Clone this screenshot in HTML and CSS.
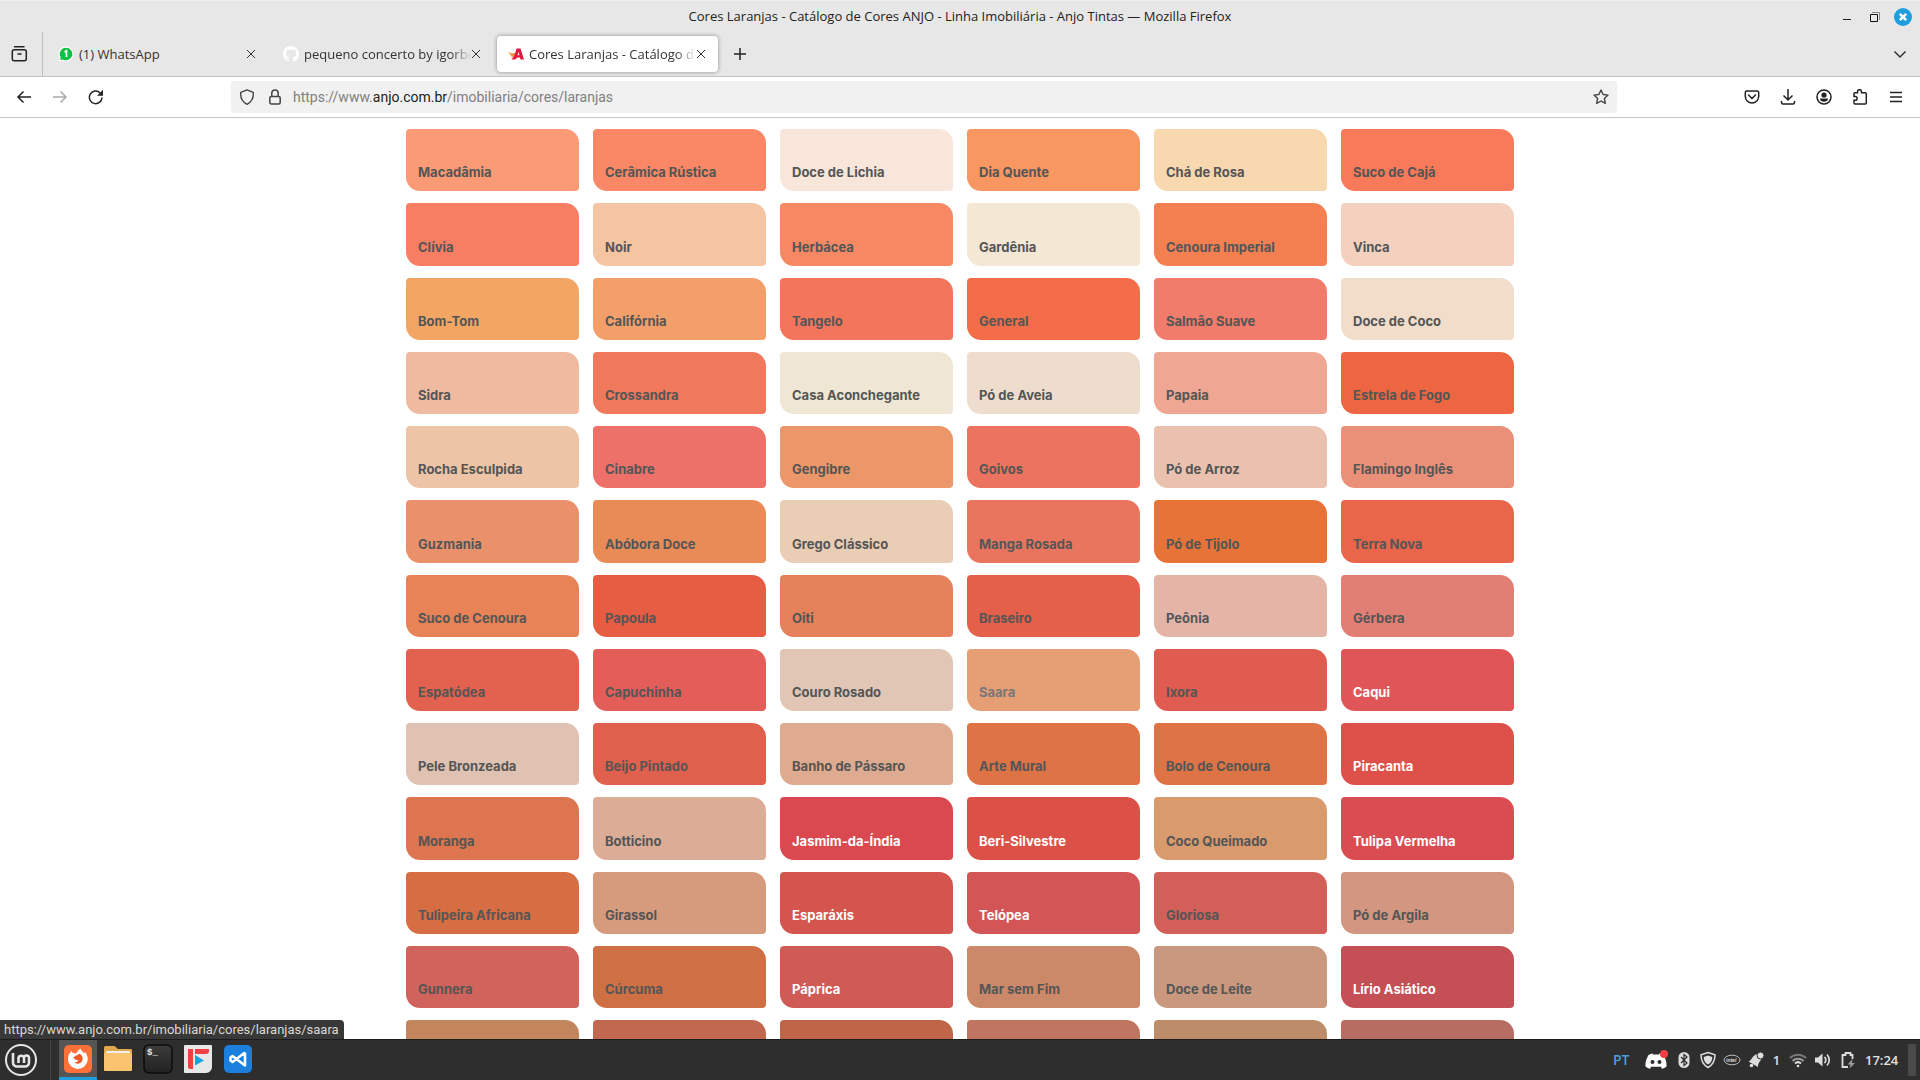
FILE: index.html
```html
<!DOCTYPE html>
<html lang="pt-BR">
<head>
<meta charset="utf-8">
<meta name="viewport" content="width=device-width, initial-scale=1">
<title>Cores Laranjas - Catálogo de Cores ANJO - Linha Imobiliária - Anjo Tintas</title>
<link rel="stylesheet" href="styles.css">
</head>
<body>
<header class="titlebar">
  <span class="window-title">Cores Laranjas - Catálogo de Cores ANJO - Linha Imobiliária - Anjo Tintas — Mozilla Firefox</span>
  <div class="window-controls">
    <button class="win" aria-label="Minimizar"><svg width="18" height="18" viewBox="0 0 18 18"><path d="M5 11.5h8" stroke="#222"/></svg></button>
    <button class="win" aria-label="Restaurar"><svg width="18" height="18" viewBox="0 0 18 18" fill="none"><path d="M6 4.5h7.500v7.500" stroke="#888"/><path d="M4.500 6.500h7v7h-7z" stroke="#111"/></svg></button>
    <button class="win" aria-label="Fechar"><svg width="18" height="18" viewBox="0 0 18 18"><circle cx="9" cy="9" r="9" fill="#1f9ede"/><path d="M5.800 5.800l6.400 6.400M12.200 5.800l-6.400 6.400" stroke="#fff" stroke-width="2.400"/></svg></button>
  </div>
</header>

<nav class="tabbar" aria-label="Abas">
  <button class="view-btn" aria-label="Visão do Firefox"><svg width="18" height="18" viewBox="0 0 18 18" fill="none" stroke="#222" stroke-width="1.500" stroke-linecap="round"><path d="M3.500 1.800h9.500"/><rect x="1.300" y="4.800" width="14" height="11" rx="2"/><path d="M7 9h3"/></svg></button>
  <div class="tab">
    <svg class="fav" width="16" height="16" viewBox="0 0 16 16"><path d="M8 .5a7.500 7.500 0 1 1-3.500 14.200L.5 15.800l1-4A7.500 7.500 0 0 1 8 .5z" fill="#fff"/><path d="M8 1.700a6.300 6.300 0 1 1-3.200 11.700L2 14l.7-2.700A6.300 6.300 0 0 1 8 1.700z" fill="#0fc143"/><path d="M6.500 6l2-1.200v6.200" fill="none" stroke="#fff" stroke-width="1.700"/></svg>
    <span class="tab-label">(1) WhatsApp</span>
    <button class="tab-close" aria-label="Fechar aba"><svg width="10" height="10" viewBox="0 0 10 10"><path d="M1 1l8 8M9 1l-8 8" stroke="#333"/></svg></button>
  </div>
  <div class="tab">
    <svg class="fav" width="16" height="16" viewBox="0 0 16 16"><path fill="#fff" d="M8 0C3.580 0 0 3.580 0 8c0 3.540 2.290 6.530 5.470 7.590.4.070.55-.17.55-.38v-1.490c-2.010.37-2.530-.49-2.690-.94-.09-.23-.48-.94-.82-1.130-.28-.15-.68-.52-.01-.53.63-.01 1.080.58 1.230.82.72 1.210 1.870.87 2.330.66.070-.52.28-.87.510-1.070-1.780-.2-3.640-.89-3.640-3.950 0-.87.310-1.590.820-2.150-.08-.2-.36-1.020.08-2.120 0 0 .67-.21 2.200.82a7.600 7.600 0 0 1 4 0c1.530-1.040 2.200-.82 2.200-.82.440 1.100.16 1.920.08 2.120.51.560.82 1.270.82 2.150 0 3.070-1.870 3.750-3.650 3.950.29.250.54.730.54 1.480v2.200c0 .21.150.46.550.38A8 8 0 0 0 16 8c0-4.420-3.580-8-8-8z"/></svg>
    <span class="tab-label fade">pequeno concerto by igorbe</span>
    <button class="tab-close" aria-label="Fechar aba"><svg width="10" height="10" viewBox="0 0 10 10"><path d="M1 1l8 8M9 1l-8 8" stroke="#333"/></svg></button>
  </div>
  <div class="tab active">
    <svg class="fav" width="16" height="16" viewBox="0 0 16 16"><path d="M0 5c2 2.500 4.500 3 8 1.500C6.500 9 5.500 11 3.800 11.500 3.500 9 1.500 8.500 0 5z" fill="#f0913c"/><path d="M8.500 2.500h4L16 13.500h-3.500l-.6-2H9.500L7 13.500H3.500C6 11 7.500 7 8.500 2.500zm2.200 3.300L9.500 9.300h1.900z" fill="#e3173e"/></svg>
    <span class="tab-label fade">Cores Laranjas - Catálogo de</span>
    <button class="tab-close" aria-label="Fechar aba"><svg width="10" height="10" viewBox="0 0 10 10"><path d="M1 1l8 8M9 1l-8 8" stroke="#333"/></svg></button>
  </div>
  <button class="tool" aria-label="Nova aba"><svg width="16" height="16" viewBox="0 0 16 16"><path d="M8 2v12M2 8h12" stroke="#222" stroke-width="1.500"/></svg></button>
  <button class="tool list-tabs" aria-label="Listar abas"><svg width="16" height="16" viewBox="0 0 16 16"><path d="M2.500 5.500L8 11l5.500-5.500" fill="none" stroke="#333" stroke-width="1.500"/></svg></button>
</nav>

<div class="toolbar">
  <div class="tools">
    <button class="tool" aria-label="Voltar"><svg width="16" height="16" viewBox="0 0 16 16"><path d="M15 8H2M7.500 2.500L2 8l5.500 5.500" fill="none" stroke="#222" stroke-width="1.500"/></svg></button>
    <button class="tool" aria-label="Avançar" disabled><svg width="16" height="16" viewBox="0 0 16 16"><path d="M1 8h13M8.500 2.500L14 8l-5.500 5.500" fill="none" stroke="#aaa" stroke-width="1.500"/></svg></button>
    <button class="tool" aria-label="Recarregar"><svg width="16" height="16" viewBox="0 0 16 16"><path d="M14 8.500A6.300 6.300 0 1 1 12 3.700" fill="none" stroke="#222" stroke-width="1.500"/><path d="M15 .8v6H9z" fill="#222"/></svg></button>
  </div>
  <div class="urlbar">
    <button class="url-btn" aria-label="Proteção"><svg width="16" height="16" viewBox="0 0 16 16"><path d="M8 .9l6.200 2.400c.6 5-1.300 9.300-6.200 12C3.100 12.600 1.200 8.300 1.800 3.300z" fill="none" stroke="#444" stroke-width="1.400" stroke-linejoin="round"/></svg></button>
    <button class="url-btn" aria-label="Conexão segura"><svg width="16" height="16" viewBox="0 0 16 16" fill="none" stroke="#444" stroke-width="1.500"><rect x="2.800" y="7.500" width="10.400" height="7.500" rx="1.500"/><path d="M4.800 7.500V4.200a3.200 3.200 0 0 1 6.400 0v3.300"/></svg></button>
    <span class="url" role="textbox" aria-label="Endereço">https://www.<b>anjo.com.br</b>/imobiliaria/cores/laranjas</span>
    <button class="url-btn" aria-label="Favoritar"><svg width="16" height="16" viewBox="0 0 16 16"><path d="M8 1l2.100 4.500 4.900.6-3.600 3.400.9 4.900L8 12l-4.300 2.400.9-4.900L1 6.100l4.900-.6z" fill="none" stroke="#444" stroke-width="1.400" stroke-linejoin="round"/></svg></button>
  </div>
  <div class="tools">
    <button class="tool" aria-label="Pocket"><svg width="16" height="16" viewBox="0 0 16 16" fill="none" stroke="#222" stroke-width="1.500"><path d="M1.300 3.500a1.500 1.500 0 0 1 1.500-1.500h10.400a1.500 1.500 0 0 1 1.500 1.500v3.800a6.700 6.700 0 0 1-13.400 0z"/><path d="M4.500 6L8 9.500 11.500 6" stroke-linecap="round"/></svg></button>
    <button class="tool" aria-label="Downloads"><svg width="16" height="16" viewBox="0 0 16 16" fill="none" stroke="#222" stroke-width="1.500"><path d="M8 0v11M3.500 6.500L8 11l4.500-4.500M1.500 12v1.500a1.500 1.500 0 0 0 1.500 1.500h10a1.500 1.500 0 0 0 1.500-1.500V12"/></svg></button>
    <button class="tool" aria-label="Conta"><svg width="16" height="16" viewBox="0 0 16 16"><circle cx="8" cy="8" r="7" fill="none" stroke="#222" stroke-width="1.500"/><circle cx="8" cy="6" r="2.600" fill="#222"/><path d="M4 9.500h8c0 2.400-1.800 3.300-4 3.300s-4-.9-4-3.300z" fill="#222"/></svg></button>
    <button class="tool" aria-label="Extensões"><svg width="16" height="16" viewBox="0 0 16 16"><path d="M5.500 3.800V2.700a2 2 0 0 1 4 0v1.100h3.800a1 1 0 0 1 1 1v9.200a1 1 0 0 1-1 1H3a1 1 0 0 1-1-1v-2.800h1.300a1.700 1.700 0 0 0 0-3.600H2V4.800a1 1 0 0 1 1-1z" fill="none" stroke="#222" stroke-width="1.500"/></svg></button>
    <button class="tool" aria-label="Menu"><svg width="16" height="16" viewBox="0 0 16 16"><path d="M2 3.500h12M2 8h12M2 12.500h12" stroke="#222" stroke-width="1.400"/></svg></button>
  </div>
</div>

<main class="page">
  <div class="swatches" id="swatches"></div>
</main>
<div class="status">https://www.anjo.com.br/imobiliaria/cores/laranjas/saara</div>

<footer class="taskbar">
  <div class="launchers">
    <button class="mint" aria-label="Menu"><svg width="32" height="32" viewBox="0 0 32 32" fill="none" stroke="#e6e6e6"><circle cx="16" cy="16" r="15" stroke-width="2"/><path d="M8 9v9.500a4 4 0 0 0 4 4h8a4 4 0 0 0 4-4V14a2.500 2.500 0 0 0-5 0v5M19 14a2.800 2.800 0 0 0-5.500 0v5" stroke-width="2.600"/></svg></button>
    <button class="app current" aria-label="Firefox"><svg width="30" height="30" viewBox="0 0 30 30"><rect x="1" y="1" width="28" height="28" rx="5" fill="#ff7139"/><path d="M6 10l2.500-3 1.500 2 3 .5C14 7 16 6 17.500 4.500c0 2 2.500 2.800 3.500 5l1-1.500c2 2.300 3 5 2.700 8A10 10 0 0 1 15 25 9.800 9.800 0 0 1 5 15.500C5 13 5.500 11.500 6 10z" fill="#fff"/><path d="M10 14l3-2.500c2.500-.3 1.500-2 4-1.500 2 1 3 3 2.500 5.500a4.800 4.800 0 0 1-8.500 2.500c2 .6 3.500-.4 4.500-1.500l-2-.5z" fill="#f05a28"/></svg></button>
    <button class="app" aria-label="Arquivos"><svg width="30" height="30" viewBox="0 0 30 30"><path d="M1 3.500A1.500 1.500 0 0 1 2.500 2h9l3.500 3h13a1 1 0 0 1 1 1v8H1z" fill="#e0a84d"/><rect x="3" y="7" width="24" height="6" rx="1" fill="#eee"/><rect x="1" y="9" width="28" height="18" rx="1" fill="#f9c36f"/></svg></button>
    <button class="app" aria-label="Terminal"><svg width="30" height="30" viewBox="0 0 30 30"><defs><linearGradient id="term" x1="0" y1="0" x2="0" y2="1"><stop offset="0" stop-color="#3c3c3c"/><stop offset="1" stop-color="#222"/></linearGradient></defs><rect x="1" y="1" width="28" height="28" rx="5" fill="url(#term)" stroke="#0c0c0c" stroke-width="1.500"/><text x="4" y="11" class="prompt">$_</text></svg></button>
    <button class="app" aria-label="FreeTube"><svg width="30" height="30" viewBox="0 0 30 30"><path d="M2 1h26a1 1 0 0 1 1 1v21a6 6 0 0 1-6 6H2a1 1 0 0 1-1-1V2a1 1 0 0 1 1-1z" fill="#e8e8e8"/><path d="M5 5h5v20H7a2 2 0 0 1-2-2zM12 5h14v2a3 3 0 0 1-3 3H12z" fill="#f04242"/><path d="M12 11l9 5.500-9 5z" fill="#14a4df"/></svg></button>
    <button class="app" aria-label="Visual Studio Code"><svg width="30" height="30" viewBox="0 0 30 30"><rect x="1" y="1" width="28" height="28" rx="5" fill="#1b7fdd"/><path d="M22 8.500v13L9.500 12l-2 1.500v3l2 1.500L22 8.500" fill="none" stroke="#fff" stroke-width="2.600" stroke-linejoin="round"/></svg></button>
  </div>
  <div class="tray">
    <span class="lang">PT</span>
    <span class="slot discord"><svg width="26" height="20" viewBox="0 0 26 20"><path d="M5.500 5C8 3.500 9 3.500 9.500 3.500l.6 1h5.800l.6-1c.5 0 1.500 0 4 1.500 2 3.500 3.400 7.500 3 11.500-1.500 1.300-3 2-4.500 2.300l-1.200-2H8.200l-1.200 2c-1.500-.3-3-1-4.500-2.300C2 12.500 3.500 8.500 5.500 5z" fill="#fff"/><circle cx="9.500" cy="12" r="2" fill="#2e2e2e"/><circle cx="16.500" cy="12" r="2" fill="#2e2e2e"/><circle cx="21" cy="4" r="4" fill="#f23f43"/></svg></span>
    <span class="slot"><svg width="16" height="18" viewBox="0 0 16 18"><rect x="2.500" y="1" width="11" height="16" rx="5.500" fill="#ddd"/><path d="M5 6l6 6-3 2.500v-11L11 6l-6 6" fill="none" stroke="#2e2e2e" stroke-width="1.200"/></svg></span>
    <span class="slot"><svg width="18" height="18" viewBox="0 0 18 18"><path d="M9 1.500l7 2.300c0 6-2 10-7 12.700C4 13.800 2 9.800 2 3.800z" fill="none" stroke="#ddd" stroke-width="1.500"/><path d="M9 4.500l4.300 1.400c0 3.600-1.400 5.900-4.300 7.500-2.900-1.600-4.300-3.900-4.300-7.500z" fill="#ddd"/></svg></span>
    <span class="slot"><svg width="18" height="12" viewBox="0 0 18 12"><ellipse cx="9" cy="6" rx="8" ry="4.800" fill="none" stroke="#bbb"/><text x="3" y="8" class="intel">intel</text></svg></span>
    <span class="slot"><svg width="18" height="18" viewBox="0 0 18 18"><path d="M1.500 10.500C5 9.500 5 4.500 10 3l4.500 5c-1.500 2.500-3.500 4-3.500 8z" fill="#ddd"/><circle cx="13.500" cy="4.500" r="3.500" fill="#ddd" stroke="#2e2e2e"/><circle cx="4.500" cy="14.500" r="1.800" fill="#ddd"/></svg></span>
    <span class="count">1</span>
    <span class="slot"><svg width="18" height="16" viewBox="0 0 18 16" fill="none" stroke-width="2"><path d="M1 6a11.500 11.500 0 0 1 16 0" stroke="#777"/><path d="M3.500 9a8 8 0 0 1 11 0" stroke="#999"/><path d="M6 11.500a4.500 4.500 0 0 1 6 0" stroke="#ddd"/><circle cx="9" cy="14" r="1.300" fill="#ddd"/></svg></span>
    <span class="slot"><svg width="18" height="16" viewBox="0 0 18 16"><path d="M1 5.500h3L8.500 1.500v13L4 10.500H1z" fill="#ddd"/><path d="M10.500 5a4 4 0 0 1 0 6M13 2.500a8 8 0 0 1 0 11" fill="none" stroke="#ddd" stroke-width="1.700"/></svg></span>
    <span class="slot"><svg width="18" height="18" viewBox="0 0 18 18"><path d="M13.500 8V4h-2V2h-5v2h-3v12H9" fill="none" stroke="#ddd" stroke-width="1.800"/><path d="M13.500 8l-5 5.500h3l-1 4 5.500-5.500h-3z" fill="#999"/></svg></span>
    <time class="clock">17:24</time>
    <button class="desktop" aria-label="Mostrar área de trabalho"></button>
  </div>
</footer>
<script src="swatches.js"></script>
</body>
</html>
```
FILE: styles.css
```css
* { box-sizing: border-box; }
body {
  margin: 0;
  height: 100vh;
  display: flex;
  flex-direction: column;
  overflow: hidden;
  background: #fff;
  color: #222;
  font: 13px/20px "Open Sans", "Noto Sans", sans-serif;
}
button { border: 0; padding: 0; background: none; font: inherit; color: inherit; display: flex; align-items: center; justify-content: center; }
svg { display: block; flex: none; }

.titlebar {
  height: 32px;
  flex: none;
  display: grid;
  grid-template-columns: 1fr auto 1fr;
  align-items: center;
  background: #e7e7e7;
  border-top: 1px solid #f0f0f0;
}
.window-title { grid-column: 2; padding-bottom: 2px; }
.window-controls { justify-self: end; display: flex; gap: 10px; padding-right: 8px; }

.tabbar {
  height: 45px;
  flex: none;
  display: flex;
  align-items: center;
  background: #e7e7e7;
  border-bottom: 1px solid #c4c4c4;
}
.view-btn { width: 43px; height: 44px; padding-right: 2px; border-right: 1px solid #bdbdbd; }
.tab {
  width: 221px;
  height: 36px;
  margin-left: 4px;
  padding: 0 12px 0 11px;
  display: flex;
  align-items: center;
  gap: 5px;
  border-radius: 4px;
}
.tab.active { background: #fff; box-shadow: 0 0 4px rgba(0, 0, 0, .4); }
.tab-label { flex: 1; min-width: 0; overflow: hidden; white-space: nowrap; color: #333; }
.fade { -webkit-mask-image: linear-gradient(to left, transparent, #000 20px); mask-image: linear-gradient(to left, transparent, #000 20px); }
.tab-close { margin-left: -5px; }
.tool { width: 36px; height: 36px; }
.tab + .tool { margin-left: 4px; }
.list-tabs { margin-left: auto; margin-right: 2px; }

.toolbar {
  height: 41px;
  flex: none;
  display: flex;
  align-items: center;
  gap: 117px;
  padding: 0 6px;
  border-bottom: 1px solid #c4c4c4;
}
.tools { display: flex; }
.urlbar {
  flex: 1;
  height: 32px;
  display: flex;
  align-items: center;
  padding: 0 2px;
  border-radius: 4px;
  background: #f1f1f1;
}
.url-btn { width: 28px; height: 28px; }
.url { flex: 1; padding-left: 4px; color: #808080; white-space: nowrap; font-family: Roboto, sans-serif; font-size: 14px; }
.url b { font-weight: 400; color: #222; }

.page { flex: 1; min-height: 0; overflow: hidden; padding-top: 11px; }
.swatches {
  max-width: 1140px;
  margin: 0 auto;
  padding: 0 16px;
  display: grid;
  grid-template-columns: repeat(6, 1fr);
  gap: 12px 14px;
}
.swatch {
  aspect-ratio: 25 / 9;
  display: flex;
  align-items: flex-end;
  padding: 8px 12px 9px;
  border-radius: 4px 14px;
  color: #555;
  font: 700 13px/20px Inter, sans-serif;
  text-decoration: none;
  white-space: nowrap;
}
.swatch.light { color: #fff; }
.swatch.hover { color: #777; }

.status {
  position: absolute;
  left: 0;
  bottom: 41px;
  height: 19px;
  padding: 0 5px 0 4px;
  border-radius: 0 4px 0 0;
  background: #383838;
  color: #d8d8d8;
  font-family: Roboto, sans-serif;
}

.taskbar {
  height: 41px;
  flex: none;
  display: flex;
  justify-content: space-between;
  background: #2e2e2e;
  border-top: 1px solid #1c1c1c;
  color: #e0e0e0;
}
.launchers { display: flex; }
.mint { width: 51px; padding-right: 9px; margin-right: 8px; border-right: 1px solid #444; }
.app { width: 38px; margin-right: 2px; padding-bottom: 2px; border-bottom: 3px solid transparent; padding-top: 2px; }
.app.current { background: #555; border-color: #1f9ede; }
.prompt { font: 700 9px "Liberation Mono", monospace; fill: #eee; }
.intel { font: italic 700 5px "Liberation Sans", sans-serif; fill: #ddd; }
.tray { display: flex; align-items: center; font-weight: 600; }
.slot { width: 24px; display: flex; justify-content: center; }
.count ~ .slot { width: 25px; }
.slot.discord { width: 32px; }
.lang { width: 27px; color: #4a9fd5; font-size: 14px; }
.count { width: 17px; text-align: center; }
.clock { width: 48px; padding-left: 5px; }
.desktop { width: 8px; height: 32px; margin-right: 4px; background: #4a4a4a; }
```
FILE: swatches.js
```js
const colors = [
  ["Macadâmia", "#fb9b76"], ["Cerâmica Rústica", "#fa8866"], ["Doce de Lichia", "#f9e6da"], ["Dia Quente", "#f89762"], ["Chá de Rosa", "#f8d8ae"], ["Suco de Cajá", "#f97a5b"],
  ["Clívia", "#f77e63"], ["Noir", "#f5c4a3"], ["Herbácea", "#f68864"], ["Gardênia", "#f4e8d4"], ["Cenoura Imperial", "#f48051"], ["Vinca", "#f4d1be"],
  ["Bom-Tom", "#f3a664"], ["Califórnia", "#f39f6a"], ["Tangelo", "#f3765c"], ["General", "#f36e48"], ["Salmão Suave", "#f17c6c"], ["Doce de Coco", "#f1ddca"],
  ["Sidra", "#f0baa1"], ["Crossandra", "#ef795a"], ["Casa Aconchegante", "#efe7d3"], ["Pó de Aveia", "#eeddcd"], ["Papaia", "#efa692"], ["Estrela de Fogo", "#ee6641"],
  ["Rocha Esculpida", "#edc5a6"], ["Cinabre", "#ed7069"], ["Gengibre", "#eb9769"], ["Goivos", "#ec735f"], ["Pó de Arroz", "#eac1ae"], ["Flamingo Inglês", "#ea9078"],
  ["Guzmania", "#ea916b"], ["Abóbora Doce", "#e98b57"], ["Grego Clássico", "#e9cdb4"], ["Manga Rosada", "#e9755e"], ["Pó de Tijolo", "#e77339"], ["Terra Nova", "#e9664b"],
  ["Suco de Cenoura", "#e78356"], ["Papoula", "#e75d43"], ["Oiti", "#e5815b"], ["Braseiro", "#e4604a"], ["Peônia", "#e4b5a7"], ["Gérbera", "#e27f75"],
  ["Espatódea", "#e3624f"], ["Capuchinha", "#e35d59"], ["Couro Rosado", "#e2c6b5"], ["Saara", "#e69f75", "hover"], ["Ixora", "#e05b50"], ["Caqui", "#e05558", "light"],
  ["Pele Bronzeada", "#dfc2b1"], ["Beijo Pintado", "#df604c"], ["Banho de Pássaro", "#deab90"], ["Arte Mural", "#de7446"], ["Bolo de Cenoura", "#de7446"], ["Piracanta", "#dd514a", "light"],
  ["Moranga", "#dc7550"], ["Botticino", "#dbad97"], ["Jasmim-da-Índia", "#db4950", "light"], ["Beri-Silvestre", "#db5148", "light"], ["Coco Queimado", "#d99a6d"], ["Tulipa Vermelha", "#d94c51", "light"],
  ["Tulipeira Africana", "#d76d43"], ["Girassol", "#d69b7c"], ["Esparáxis", "#d4554d", "light"], ["Telópea", "#d35555", "light"], ["Gloriosa", "#d26059"], ["Pó de Argila", "#d29681"],
  ["Gunnera", "#d0635b"], ["Cúrcuma", "#ce7044"], ["Páprica", "#cf5b54", "light"], ["Mar sem Fim", "#cb8969"], ["Doce de Leite", "#c9987e"], ["Lírio Asiático", "#c45055", "light"],
  ["", "#c3855b"], ["", "#c06850"], ["", "#c06548"], ["", "#c07560"], ["", "#bd8c68"], ["", "#b76d62"]
];

const grid = document.getElementById("swatches");
for (const [name, color, tone] of colors) {
  const link = document.createElement("a");
  link.className = "swatch" + (tone ? " " + tone : "");
  link.href = "#";
  link.style.backgroundColor = color;
  link.textContent = name;
  grid.append(link);
}
```
